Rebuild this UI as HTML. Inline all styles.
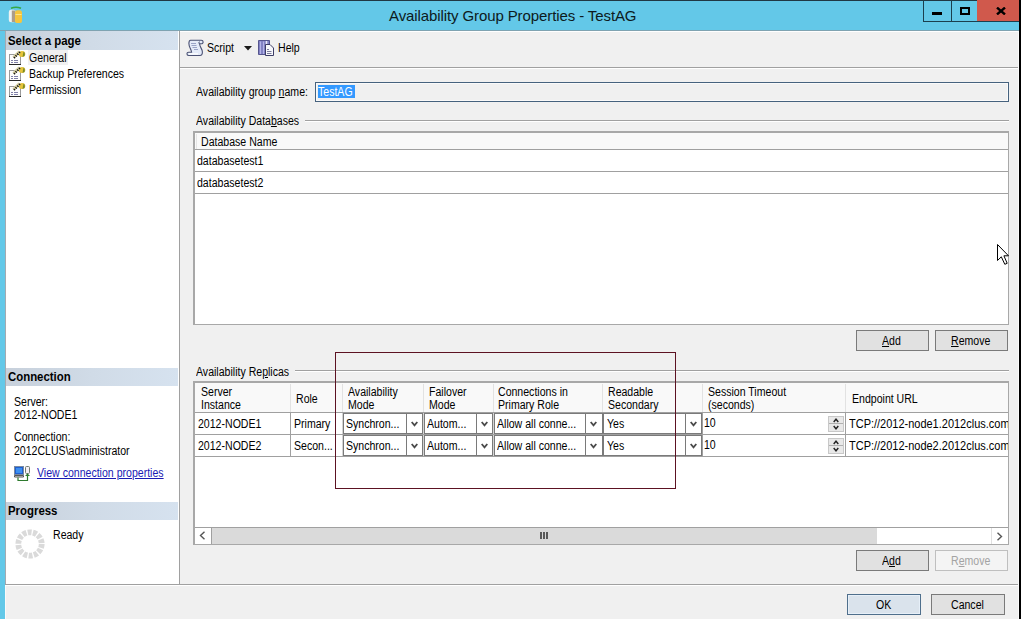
<!DOCTYPE html>
<html><head><meta charset="utf-8">
<style>
*{margin:0;padding:0}
html,body{width:1021px;height:619px;overflow:hidden;background:#000}
body{position:relative;font-family:"Liberation Sans",sans-serif;font-size:12px;color:#000}
.a{position:absolute}
.t{position:absolute;white-space:pre;line-height:13px;transform-origin:0 0}
u{text-decoration:underline;text-underline-offset:1px}
</style></head><body>
<div class="a" style="left:0px;top:0px;width:1019px;height:619px;background:#63c8e8;"></div>
<div class="a" style="left:0px;top:0px;width:1019px;height:1px;background:#203844;"></div>
<div class="a" style="left:0px;top:30px;width:1019px;height:1px;background:#7fa3b1;"></div>
<div class="a" style="left:5px;top:31px;width:1014px;height:588px;background:#f0f0f0;"></div>
<div class="a" style="left:1018px;top:31px;width:1px;height:588px;background:#fbfbfb;"></div>
<div class="t" style="left:389px;top:7px;font-size:15px;line-height:18px;color:#0d1a20;letter-spacing:-0.1px">Availability Group Properties - TestAG</div>
<div class="a" style="left:923px;top:0px;width:29px;height:22px;background:transparent;border:1px solid #1b3f4e;border-top:none;box-sizing:border-box"></div>
<div class="a" style="left:951px;top:0px;width:27px;height:22px;background:transparent;border:1px solid #1b3f4e;border-top:none;border-left:none;box-sizing:border-box"></div>
<div class="a" style="left:977px;top:0px;width:42px;height:21px;background:#d0594c;"></div>
<div class="a" style="left:977px;top:21px;width:42px;height:1px;background:#1b3f4e;"></div>
<div class="a" style="left:932px;top:12px;width:10px;height:3px;background:#000;"></div>
<div class="a" style="left:960px;top:7px;width:10px;height:8px;background:transparent;border:2px solid #000;box-sizing:border-box"></div>
<svg class="a" style="left:996px;top:7px" width="10" height="8" viewBox="0 0 10 8"><path d="M1 0.6 L9 7.4 M9 0.6 L1 7.4" stroke="#000" stroke-width="2.4"/></svg>
<svg class="a" style="left:6px;top:5px" width="20" height="20" viewBox="0 0 20 20">
<rect x="2.8" y="4.8" width="7" height="12.5" rx="2.2" fill="#eef3f3"/>
<rect x="5.8" y="5.5" width="3.5" height="11.5" fill="#ad9d88"/>
<rect x="9" y="5.3" width="7" height="12.8" rx="2.2" fill="#f6c53c"/>
<rect x="9.5" y="9" width="6" height="1" fill="#fde78a"/>
<path d="M5 3.2 Q10 1.2 15 3.2" stroke="#35a845" stroke-width="1.6" fill="none"/>
</svg>
<div class="a" style="left:5px;top:31px;width:174px;height:553px;background:#fff;"></div>
<div class="a" style="left:5px;top:31px;width:173px;height:19px;background:linear-gradient(to right,#c7d0db,#d0dbe7 50%,#d6e2ef);"></div>
<div class="t" style="left:8px;top:35px;transform:scaleX(0.95);font-weight:bold;color:#000">Select a page</div>
<div class="a" style="left:28px;top:50px;width:40px;height:15px;background:#f0f0f0;"></div>
<svg class="a" style="left:8px;top:50px" width="18" height="16" viewBox="0 0 18 16">
<rect x="1.5" y="4.5" width="11" height="10" fill="#fdfdfd" stroke="#9a9a9a"/>
<path d="M1 14.5 h12" stroke="#2a2a2a" stroke-width="1"/>
<path d="M3 10.5 h2 M6 10.5 h4 M3 12.5 h2 M6 12.5 h4" stroke="#8080a8"/>
<ellipse cx="14" cy="4" rx="3.3" ry="3" fill="#e6c43a"/>
<path d="M15.5 1.5 q2 1.5 1 4.5 l-2 1z" fill="#7a8a28"/>
<path d="M5.5 7.5 L11.5 1.5" stroke="#d8d0a0" stroke-width="3"/>
<path d="M6 8 L12 2" stroke="#111" stroke-width="2" stroke-dasharray="1.2 1.2"/>
</svg>
<div class="t" style="left:29px;top:52px;transform:scaleX(0.88);">General</div>
<svg class="a" style="left:8px;top:66px" width="18" height="16" viewBox="0 0 18 16">
<rect x="1.5" y="4.5" width="11" height="10" fill="#fdfdfd" stroke="#9a9a9a"/>
<path d="M1 14.5 h12" stroke="#2a2a2a" stroke-width="1"/>
<path d="M3 10.5 h2 M6 10.5 h4 M3 12.5 h2 M6 12.5 h4" stroke="#8080a8"/>
<ellipse cx="14" cy="4" rx="3.3" ry="3" fill="#e6c43a"/>
<path d="M15.5 1.5 q2 1.5 1 4.5 l-2 1z" fill="#7a8a28"/>
<path d="M5.5 7.5 L11.5 1.5" stroke="#d8d0a0" stroke-width="3"/>
<path d="M6 8 L12 2" stroke="#111" stroke-width="2" stroke-dasharray="1.2 1.2"/>
</svg>
<div class="t" style="left:29px;top:68px;transform:scaleX(0.88);">Backup Preferences</div>
<svg class="a" style="left:8px;top:82px" width="18" height="16" viewBox="0 0 18 16">
<rect x="1.5" y="4.5" width="11" height="10" fill="#fdfdfd" stroke="#9a9a9a"/>
<path d="M1 14.5 h12" stroke="#2a2a2a" stroke-width="1"/>
<path d="M3 10.5 h2 M6 10.5 h4 M3 12.5 h2 M6 12.5 h4" stroke="#8080a8"/>
<ellipse cx="14" cy="4" rx="3.3" ry="3" fill="#e6c43a"/>
<path d="M15.5 1.5 q2 1.5 1 4.5 l-2 1z" fill="#7a8a28"/>
<path d="M5.5 7.5 L11.5 1.5" stroke="#d8d0a0" stroke-width="3"/>
<path d="M6 8 L12 2" stroke="#111" stroke-width="2" stroke-dasharray="1.2 1.2"/>
</svg>
<div class="t" style="left:29px;top:84px;transform:scaleX(0.88);">Permission</div>
<div class="a" style="left:5px;top:368px;width:173px;height:18px;background:linear-gradient(to right,#c7d0db,#d0dbe7 50%,#d6e2ef);"></div>
<div class="t" style="left:8px;top:371px;transform:scaleX(0.95);font-weight:bold;color:#000">Connection</div>
<div class="t" style="left:14px;top:396px;transform:scaleX(0.88);">Server:</div>
<div class="t" style="left:14px;top:409px;transform:scaleX(0.88);">2012-NODE1</div>
<div class="t" style="left:14px;top:431px;transform:scaleX(0.88);">Connection:</div>
<div class="t" style="left:14px;top:445px;transform:scaleX(0.88);">2012CLUS\administrator</div>
<svg class="a" style="left:14px;top:465px" width="18" height="18" viewBox="0 0 18 18">
<rect x="0.5" y="1.5" width="9" height="8" fill="#1f5fd0" stroke="#7a8aa0"/>
<rect x="2" y="3" width="6" height="5" fill="#3d8ff0"/>
<path d="M0.5 10.5 h9 v1.5 h-9z" fill="#e8e8e8" stroke="#444" stroke-width="0.9"/>
<rect x="11.5" y="1.5" width="4" height="7" rx="1" fill="#f4eef4" stroke="#707a70"/>
<path d="M4 12.5 v3 h9.5 v-6.5" stroke="#2e7a2e" stroke-width="1.2" fill="none"/>
<path d="M11 11 l2.5 -2.5 l2.5 2.5z" fill="#2e7a2e"/>
</svg>
<div class="t" style="left:37px;top:467px;transform:scaleX(0.88);color:#1a1ab4"><u>View connection properties</u></div>
<div class="a" style="left:5px;top:502px;width:173px;height:18px;background:linear-gradient(to right,#c7d0db,#d0dbe7 50%,#d6e2ef);"></div>
<div class="t" style="left:8px;top:505px;transform:scaleX(0.95);font-weight:bold;color:#000">Progress</div>
<svg class="a" style="left:15px;top:529px" width="30" height="30" viewBox="0 0 30 30"><circle cx="15" cy="15" r="11.7" fill="none" stroke="#dadada" stroke-width="5.8" stroke-dasharray="3.9 1.35"/></svg>
<div class="t" style="left:53px;top:529px;transform:scaleX(0.88);">Ready</div>
<div class="a" style="left:179px;top:31px;width:1px;height:553px;background:#a0a0a0;"></div>
<div class="a" style="left:5px;top:31px;width:1px;height:553px;background:#a4aab0;"></div>
<div class="a" style="left:5px;top:585px;width:1px;height:34px;background:#fafafa;"></div>
<div class="a" style="left:5px;top:584px;width:1013px;height:1px;background:#a0a0a0;"></div>
<div class="a" style="left:5px;top:585px;width:1013px;height:1px;background:#ffffff;"></div>
<div class="a" style="left:180px;top:31px;width:838px;height:1px;background:#ffffff;"></div>
<div class="a" style="left:180px;top:67px;width:838px;height:1px;background:#a0a0a0;"></div>
<div class="a" style="left:180px;top:68px;width:838px;height:1px;background:#ffffff;"></div>
<svg class="a" style="left:186px;top:39px" width="18" height="18" viewBox="0 0 18 18">
<path d="M4.5 1.2 H15.3 A1.8 1.8 0 0 1 15.3 4.8 H13.6 C13.8 8.5 16.4 9.8 16.4 13 C16.4 15 15.5 16.5 14 16.5 H2.6 A1.65 1.65 0 0 1 2.6 13.2 H5.6 C5.2 10 2.9 8.5 2.9 4.6 C2.9 2.6 3.4 1.2 4.5 1.2 Z" fill="#e4ebf9" stroke="#4a5174" stroke-width="1.1"/>
<path d="M5 4.5 h5 M5.5 6.5 h5 M6.5 8.5 h4.5 M8 10.5 h4" stroke="#9aa4c8" stroke-width="1"/>
<path d="M13.6 4.8 C12.5 4.8 12.6 2.8 13.8 2.8" stroke="#4a5174" stroke-width="1" fill="none"/>
<path d="M3 14.9 h9" stroke="#ffffff" stroke-width="1.3"/>
</svg>
<div class="t" style="left:207px;top:42px;transform:scaleX(0.88);">Script</div>
<svg class="a" style="left:244px;top:46px" width="8" height="5" viewBox="0 0 8 5"><path d="M0 0 H8 L4 4.5z" fill="#1a1a1a"/></svg>
<svg class="a" style="left:257px;top:39px" width="18" height="18" viewBox="0 0 18 18">
<path d="M1.5 1.5 h11 v14 h-11z" fill="#8282c4" stroke="#55558e"/>
<path d="M3.5 2.5 v12.5 M6.5 2.5 v12.5" stroke="#b4b4e8" stroke-width="1"/>
<path d="M9.5 2 v13" stroke="#e8e8f8" stroke-width="1.5"/>
<path d="M8.5 5.5 h4.5 l3.5 3.5 v7.5 h-8z" fill="#f6f7fb" stroke="#3c3c66"/>
<path d="M10 10.5 h2 M10 12.5 h4.5 M10 14.5 h4.5" stroke="#7a7a9a"/>
</svg>
<div class="t" style="left:278px;top:42px;transform:scaleX(0.88);">Help</div>
<div class="t" style="left:196px;top:86px;transform:scaleX(0.88);">Availability group <u>n</u>ame:</div>
<div class="a" style="left:315px;top:82px;width:694px;height:20px;background:#f0f0f0;border:1px solid #46627e;box-sizing:border-box"></div>
<div class="a" style="left:316px;top:83px;width:692px;height:18px;background:transparent;border:1px solid #fafafa;box-sizing:border-box"></div>
<div class="a" style="left:318px;top:85px;width:37px;height:13px;background:#3399ff;"></div>
<div class="t" style="left:318px;top:86px;transform:scaleX(0.88);color:#fff">TestAG</div>
<div class="t" style="left:196px;top:115px;transform:scaleX(0.88);">Availability Data<u>b</u>ases</div>
<div class="a" style="left:305px;top:120px;width:704px;height:1px;background:#a0a0a0;"></div>
<div class="a" style="left:305px;top:121px;width:704px;height:1px;background:#ffffff;"></div>
<div class="a" style="left:193px;top:131px;width:816px;height:194px;background:#fff;border:2px solid #a8a8a8;border-right-width:1px;border-bottom-width:1px;box-sizing:border-box"></div>
<div class="a" style="left:195px;top:133px;width:813px;height:16px;background:#f9f9f9;"></div>
<div class="a" style="left:196px;top:134px;width:1px;height:15px;background:#e4e4e4;"></div>
<div class="a" style="left:195px;top:149px;width:813px;height:1px;background:#a0a0a0;"></div>
<div class="a" style="left:195px;top:171px;width:813px;height:1px;background:#a0a0a0;"></div>
<div class="a" style="left:195px;top:193px;width:813px;height:1px;background:#a0a0a0;"></div>
<div class="t" style="left:201px;top:136px;transform:scaleX(0.88);">Database Name</div>
<div class="t" style="left:197px;top:155px;transform:scaleX(0.88);">databasetest1</div>
<div class="t" style="left:197px;top:177px;transform:scaleX(0.88);">databasetest2</div>
<div class="a" style="left:856px;top:330px;width:73px;height:21px;background:#e1e1e1;border:1px solid #7a7a7a;box-sizing:border-box"></div>
<div class="t" style="left:882px;top:335px;transform:scaleX(0.88);"><u>A</u>dd</div>
<div class="a" style="left:935px;top:330px;width:73px;height:21px;background:#e1e1e1;border:1px solid #7a7a7a;box-sizing:border-box"></div>
<div class="t" style="left:951px;top:335px;transform:scaleX(0.88);"><u>R</u>emove</div>
<div class="t" style="left:196px;top:366px;transform:scaleX(0.88);">Availability Re<u>p</u>licas</div>
<div class="a" style="left:295px;top:370px;width:714px;height:1px;background:#a0a0a0;"></div>
<div class="a" style="left:295px;top:371px;width:714px;height:1px;background:#ffffff;"></div>
<div class="a" style="left:193px;top:381px;width:816px;height:164px;background:#fff;border:2px solid #a8a8a8;border-right-width:1px;border-bottom-width:1px;box-sizing:border-box"></div>
<div class="a" style="left:195px;top:383px;width:813px;height:29px;background:#f9f9f9;"></div>
<div class="a" style="left:195px;top:412px;width:813px;height:1px;background:#a0a0a0;"></div>
<div class="a" style="left:290px;top:384px;width:1px;height:28px;background:#e2e2e2;"></div>
<div class="a" style="left:290px;top:413px;width:1px;height:43px;background:#a0a0a0;"></div>
<div class="a" style="left:342px;top:384px;width:1px;height:28px;background:#e2e2e2;"></div>
<div class="a" style="left:342px;top:413px;width:1px;height:43px;background:#d4d4d4;"></div>
<div class="a" style="left:423px;top:384px;width:1px;height:28px;background:#e2e2e2;"></div>
<div class="a" style="left:423px;top:413px;width:1px;height:43px;background:#d4d4d4;"></div>
<div class="a" style="left:493px;top:384px;width:1px;height:28px;background:#e2e2e2;"></div>
<div class="a" style="left:493px;top:413px;width:1px;height:43px;background:#d4d4d4;"></div>
<div class="a" style="left:602px;top:384px;width:1px;height:28px;background:#e2e2e2;"></div>
<div class="a" style="left:602px;top:413px;width:1px;height:43px;background:#d4d4d4;"></div>
<div class="a" style="left:702px;top:384px;width:1px;height:28px;background:#e2e2e2;"></div>
<div class="a" style="left:702px;top:413px;width:1px;height:43px;background:#a0a0a0;"></div>
<div class="a" style="left:845px;top:384px;width:1px;height:28px;background:#e2e2e2;"></div>
<div class="a" style="left:845px;top:413px;width:1px;height:43px;background:#a0a0a0;"></div>
<div class="a" style="left:195px;top:434px;width:813px;height:1px;background:#a0a0a0;"></div>
<div class="a" style="left:195px;top:456px;width:813px;height:1px;background:#a0a0a0;"></div>
<div class="t" style="left:201px;top:386px;transform:scaleX(0.88);">Server</div>
<div class="t" style="left:201px;top:399px;transform:scaleX(0.88);">Instance</div>
<div class="t" style="left:296px;top:393px;transform:scaleX(0.88);">Role</div>
<div class="t" style="left:348px;top:386px;transform:scaleX(0.88);">Availability</div>
<div class="t" style="left:348px;top:399px;transform:scaleX(0.88);">Mode</div>
<div class="t" style="left:429px;top:386px;transform:scaleX(0.88);">Failover</div>
<div class="t" style="left:429px;top:399px;transform:scaleX(0.88);">Mode</div>
<div class="t" style="left:498px;top:386px;transform:scaleX(0.88);">Connections in</div>
<div class="t" style="left:498px;top:399px;transform:scaleX(0.88);">Primary Role</div>
<div class="t" style="left:608px;top:386px;transform:scaleX(0.88);">Readable</div>
<div class="t" style="left:608px;top:399px;transform:scaleX(0.88);">Secondary</div>
<div class="t" style="left:708px;top:386px;transform:scaleX(0.88);">Session Timeout</div>
<div class="t" style="left:708px;top:399px;transform:scaleX(0.88);">(seconds)</div>
<div class="t" style="left:852px;top:393px;transform:scaleX(0.88);">Endpoint URL</div>
<div class="t" style="left:198px;top:418px;transform:scaleX(0.88);">2012-NODE1</div>
<div class="t" style="left:294px;top:418px;transform:scaleX(0.88);">Primary</div>
<div class="a" style="left:343px;top:413px;width:80px;height:21px;background:#fff;border:1px solid #7a7a7a;box-sizing:border-box"></div>
<div class="a" style="left:406px;top:413px;width:1px;height:21px;background:#7a7a7a;"></div>
<svg class="a" style="left:411px;top:421px" width="7" height="6" viewBox="0 0 7 6"><path d="M0.7 1 L3.5 4.3 L6.3 1" stroke="#4a4a4a" stroke-width="1.8" fill="none"/></svg>
<div class="t" style="left:346px;top:418px;transform:scaleX(0.88);">Synchron...</div>
<div class="a" style="left:424px;top:413px;width:69px;height:21px;background:#fff;border:1px solid #7a7a7a;box-sizing:border-box"></div>
<div class="a" style="left:476px;top:413px;width:1px;height:21px;background:#7a7a7a;"></div>
<svg class="a" style="left:481px;top:421px" width="7" height="6" viewBox="0 0 7 6"><path d="M0.7 1 L3.5 4.3 L6.3 1" stroke="#4a4a4a" stroke-width="1.8" fill="none"/></svg>
<div class="t" style="left:427px;top:418px;transform:scaleX(0.88);">Autom...</div>
<div class="a" style="left:494px;top:413px;width:109px;height:21px;background:#fff;border:1px solid #7a7a7a;box-sizing:border-box"></div>
<div class="a" style="left:585px;top:413px;width:1px;height:21px;background:#7a7a7a;"></div>
<svg class="a" style="left:590px;top:421px" width="7" height="6" viewBox="0 0 7 6"><path d="M0.7 1 L3.5 4.3 L6.3 1" stroke="#4a4a4a" stroke-width="1.8" fill="none"/></svg>
<div class="t" style="left:497px;top:418px;transform:scaleX(0.88);">Allow all conne...</div>
<div class="a" style="left:603px;top:413px;width:99px;height:21px;background:#fff;border:1px solid #7a7a7a;box-sizing:border-box"></div>
<div class="a" style="left:685px;top:413px;width:1px;height:21px;background:#7a7a7a;"></div>
<svg class="a" style="left:690px;top:421px" width="7" height="6" viewBox="0 0 7 6"><path d="M0.7 1 L3.5 4.3 L6.3 1" stroke="#4a4a4a" stroke-width="1.8" fill="none"/></svg>
<div class="t" style="left:607px;top:418px;transform:scaleX(0.88);">Yes</div>
<div class="t" style="left:704px;top:417px;transform:scaleX(0.88);">10</div>
<div class="a" style="left:828px;top:416px;width:16px;height:16px;background:#e8e8e8;border:1px solid #c8c8c8;box-sizing:border-box"></div>
<div class="a" style="left:829px;top:423px;width:14px;height:1px;background:#b0b0b0;"></div>
<svg class="a" style="left:833px;top:417px" width="6" height="14" viewBox="0 0 6 14"><path d="M0.7 5 L3 2.2 L5.3 5 M0.7 9 L3 11.8 L5.3 9" stroke="#222" stroke-width="1.4" fill="none"/></svg>
<div class="t" style="left:849px;top:418px;transform:scaleX(0.915);">TCP://2012-node1.2012clus.com</div>
<div class="t" style="left:198px;top:440px;transform:scaleX(0.88);">2012-NODE2</div>
<div class="t" style="left:294px;top:440px;transform:scaleX(0.88);">Secon...</div>
<div class="a" style="left:343px;top:435px;width:80px;height:21px;background:#fff;border:1px solid #7a7a7a;box-sizing:border-box"></div>
<div class="a" style="left:406px;top:435px;width:1px;height:21px;background:#7a7a7a;"></div>
<svg class="a" style="left:411px;top:443px" width="7" height="6" viewBox="0 0 7 6"><path d="M0.7 1 L3.5 4.3 L6.3 1" stroke="#4a4a4a" stroke-width="1.8" fill="none"/></svg>
<div class="t" style="left:346px;top:440px;transform:scaleX(0.88);">Synchron...</div>
<div class="a" style="left:424px;top:435px;width:69px;height:21px;background:#fff;border:1px solid #7a7a7a;box-sizing:border-box"></div>
<div class="a" style="left:476px;top:435px;width:1px;height:21px;background:#7a7a7a;"></div>
<svg class="a" style="left:481px;top:443px" width="7" height="6" viewBox="0 0 7 6"><path d="M0.7 1 L3.5 4.3 L6.3 1" stroke="#4a4a4a" stroke-width="1.8" fill="none"/></svg>
<div class="t" style="left:427px;top:440px;transform:scaleX(0.88);">Autom...</div>
<div class="a" style="left:494px;top:435px;width:109px;height:21px;background:#fff;border:1px solid #7a7a7a;box-sizing:border-box"></div>
<div class="a" style="left:585px;top:435px;width:1px;height:21px;background:#7a7a7a;"></div>
<svg class="a" style="left:590px;top:443px" width="7" height="6" viewBox="0 0 7 6"><path d="M0.7 1 L3.5 4.3 L6.3 1" stroke="#4a4a4a" stroke-width="1.8" fill="none"/></svg>
<div class="t" style="left:497px;top:440px;transform:scaleX(0.88);">Allow all conne...</div>
<div class="a" style="left:603px;top:435px;width:99px;height:21px;background:#fff;border:1px solid #7a7a7a;box-sizing:border-box"></div>
<div class="a" style="left:685px;top:435px;width:1px;height:21px;background:#7a7a7a;"></div>
<svg class="a" style="left:690px;top:443px" width="7" height="6" viewBox="0 0 7 6"><path d="M0.7 1 L3.5 4.3 L6.3 1" stroke="#4a4a4a" stroke-width="1.8" fill="none"/></svg>
<div class="t" style="left:607px;top:440px;transform:scaleX(0.88);">Yes</div>
<div class="t" style="left:704px;top:439px;transform:scaleX(0.88);">10</div>
<div class="a" style="left:828px;top:438px;width:16px;height:16px;background:#e8e8e8;border:1px solid #c8c8c8;box-sizing:border-box"></div>
<div class="a" style="left:829px;top:445px;width:14px;height:1px;background:#b0b0b0;"></div>
<svg class="a" style="left:833px;top:439px" width="6" height="14" viewBox="0 0 6 14"><path d="M0.7 5 L3 2.2 L5.3 5 M0.7 9 L3 11.8 L5.3 9" stroke="#222" stroke-width="1.4" fill="none"/></svg>
<div class="t" style="left:849px;top:440px;transform:scaleX(0.915);">TCP://2012-node2.2012clus.com</div>
<div class="a" style="left:1008px;top:383px;width:10px;height:80px;background:#f0f0f0;"></div>
<div class="a" style="left:1008px;top:381px;width:1px;height:164px;background:#a8a8a8;"></div>
<div class="a" style="left:195px;top:527px;width:813px;height:1px;background:#a0a0a0;"></div>
<div class="a" style="left:195px;top:528px;width:16px;height:16px;background:#fff;"></div>
<div class="a" style="left:211px;top:528px;width:1px;height:16px;background:#a0a0a0;"></div>
<svg class="a" style="left:199px;top:531px" width="7" height="9" viewBox="0 0 7 9"><path d="M5.5 0.8 L1.5 4.5 L5.5 8.2" stroke="#555" stroke-width="1.4" fill="none"/></svg>
<div class="a" style="left:212px;top:528px;width:665px;height:16px;background:#dadada;"></div>
<div class="a" style="left:877px;top:528px;width:114px;height:16px;background:#fff;"></div>
<div class="a" style="left:991px;top:528px;width:1px;height:16px;background:#e0e0e0;"></div>
<svg class="a" style="left:996px;top:532px" width="7" height="9" viewBox="0 0 7 9"><path d="M1.5 0.8 L5.5 4.5 L1.5 8.2" stroke="#555" stroke-width="1.4" fill="none"/></svg>
<div class="a" style="left:540px;top:532px;width:2px;height:7px;background:#5a5a5a;"></div>
<div class="a" style="left:543px;top:532px;width:2px;height:7px;background:#5a5a5a;"></div>
<div class="a" style="left:546px;top:532px;width:2px;height:7px;background:#5a5a5a;"></div>
<div class="a" style="left:193px;top:544px;width:816px;height:1px;background:#a8a8a8;"></div>
<div class="a" style="left:856px;top:550px;width:73px;height:21px;background:#e1e1e1;border:1px solid #7a7a7a;box-sizing:border-box"></div>
<div class="t" style="left:882px;top:555px;transform:scaleX(0.88);">A<u>d</u>d</div>
<div class="a" style="left:935px;top:550px;width:73px;height:21px;background:#f4f4f4;border:1px solid #bfbfbf;box-sizing:border-box"></div>
<div class="t" style="left:951px;top:555px;transform:scaleX(0.88);color:#a3a3a3">R<u>e</u>move</div>
<div class="a" style="left:847px;top:594px;width:74px;height:21px;background:#dae3ec;border:1px solid #4f6f8c;box-sizing:border-box"></div>
<div class="a" style="left:848px;top:595px;width:72px;height:19px;background:transparent;border:1px solid #e6eff8;box-sizing:border-box"></div>
<div class="t" style="left:876px;top:599px;transform:scaleX(0.88);">OK</div>
<div class="a" style="left:931px;top:594px;width:74px;height:21px;background:#e1e1e1;border:1px solid #7a7a7a;box-sizing:border-box"></div>
<div class="t" style="left:951px;top:599px;transform:scaleX(0.88);">Cancel</div>
<svg class="a" style="left:997px;top:244px" width="13" height="22" viewBox="0 0 13 22"><path d="M0.5 0.5 V16.5 L4.3 12.8 L7.8 20.3 L10.2 19.3 L6.9 11.8 H11.5 Z" fill="#fff" stroke="#000" stroke-width="1" stroke-linejoin="miter"/></svg>
<div class="a" style="left:335px;top:352px;width:341px;height:137px;background:transparent;border:1px solid #5c1222;box-sizing:border-box"></div>
</body></html>
